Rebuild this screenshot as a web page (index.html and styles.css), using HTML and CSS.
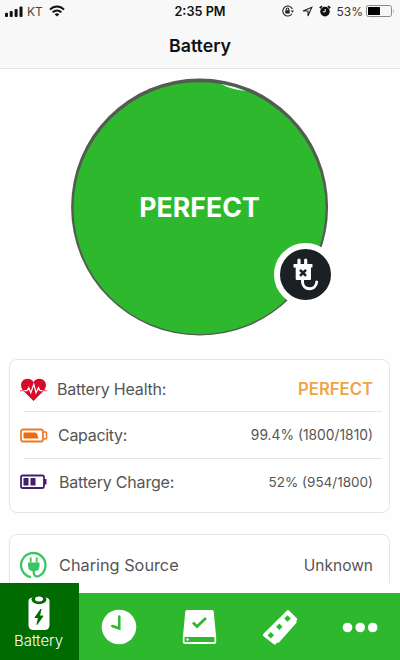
FILE: index.html
```
<!DOCTYPE html>
<html lang="en">
<head>
  <meta charset="UTF-8" />
  <meta name="viewport" content="width=device-width, initial-scale=1.0" />
  <title>Battery</title>
  <link rel="stylesheet" href="styles.css">
</head>
<body>

  <header class="top-bar">
    <div class="status-bar">
      <div class="status-left">
        <svg class="signal" width="18" height="11" viewBox="0 0 18 11" fill="#111">
          <rect x="0" y="6.8" width="3" height="4.2" rx="1" />
          <rect x="4.7" y="5" width="3" height="6" rx="1" />
          <rect x="9.6" y="3" width="3" height="8" rx="1" />
          <rect x="14.5" y="0.5" width="3" height="10.5" rx="1" />
        </svg>
        <span class="carrier">KT</span>
        <svg class="wifi" width="16" height="12" viewBox="0 0 16 12" fill="none" stroke="#111" stroke-width="2">
          <path d="M1 4.6C5 .4 11 .4 15 4.6" />
          <path d="M3.6 7.4C6.2 4.8 9.8 4.8 12.4 7.4" />
          <path d="M8 11.6L5.6 9.2Q8 7.2 10.4 9.2Z" fill="#111" stroke="none" />
        </svg>
      </div>
      <span class="time">2:35 PM</span>
      <div class="status-right">
        <svg width="12" height="12" viewBox="0 0 12 12" fill="none" stroke="#222" stroke-width="1.1">
          <path d="M10.4 4A5 5 0 1 0 10 8.7" />
          <path d="M8.8 5.6h3.2l-1.6 2.2z" fill="#222" stroke="none" />
          <rect x="3.3" y="5.2" width="4.4" height="3.3" fill="#222" stroke="none" />
          <path d="M4.2 5.4V4.3a1.3 1.3 0 0 1 2.6 0v1.1" />
        </svg>
        <svg class="arrow" width="11" height="11" viewBox="0 0 11 11" fill="none" stroke="#222" stroke-width="1.1">
          <path d="M1 5L9.8 1.2L6 10V5Z" />
        </svg>
        <svg class="alarm" width="12" height="12" viewBox="0 0 12 12">
          <circle cx="6" cy="6.6" r="4.8" fill="#111" />
          <path d="M.8 3.2L3 1.2M11.2 3.2L9 1.2" stroke="#111" stroke-width="1.8" />
          <path d="M6.2 4v2.8H3.8" fill="none" stroke="#f8f8f8" />
        </svg>
        <span class="percent">53%</span>
        <svg class="power" width="29" height="12" viewBox="0 0 29 12">
          <rect x=".5" y=".5" width="25" height="11" rx="2" fill="none" stroke="#888" />
          <rect x="2" y="2" width="12" height="8" rx=".5" fill="#000" />
          <path d="M27 4q1.5 2 0 4z" fill="#888" />
        </svg>
      </div>
    </div>
    <h1>Battery</h1>
  </header>

  <main class="content">
    <div class="gauge">
      <svg class="dial" width="258" height="258" viewBox="0 0 258 258">
        <circle cx="128.600" cy="129" r="128.500" fill="#525d50" />
        <circle cx="128.600" cy="130.200" r="126" fill="#2eb82e" />
        <path d="M150 6Q162 8 175 13Q160 11.500 150 6Z" fill="#fff" />
      </svg>
      <span class="gauge-text">PERFECT</span>
      <div class="plug-badge">
        <svg width="51" height="51" viewBox="0 0 51 51">
          <path d="M14 15h18q.5 0 .5.500v2.500q0 .5-.5.500h-1V30q0 1-1 1H16.700q-1 0-1-1V18.500H14q-.5 0-.5-.5v-2.500q0-.5.5-.5z" fill="#fff" />
          <path d="M19 11v5M25.700 11v5" stroke="#fff" stroke-width="3.200" stroke-linecap="round" />
          <path d="M20 20.800l6 6M26 20.800l-6 6" stroke="#1b2024" stroke-width="2.600" />
          <path d="M22.500 31v1.500c0 9.500 13.500 9.500 14.200.5" fill="none" stroke="#fff" stroke-width="2.900" stroke-linecap="round" />
        </svg>
      </div>
    </div>

    <section class="card">
      <div class="row first">
        <svg class="row-icon" width="28" height="28" viewBox="0 0 28 28">
          <path d="M13.500 26L3 15.500C-1.500 9.500 2.500 3.800 7.500 3.800C10.500 3.800 12.500 5.300 13.500 7.300C14.500 5.300 16.500 3.800 19.500 3.800C24.500 3.800 28.500 9.500 24 15.500Z" fill="#d80a2c" />
          <path d="M1 15.700h6l1.800-3 2 5 3-8.500 2.200 8.500 2.500-5 1.500 3H26" fill="none" stroke="#fff" stroke-width="1.200" />
          <path d="M0 15.700h4.500M22 15.700h5" stroke="#e05068" stroke-width="1" />
        </svg>
        <span class="label health">Battery Health:</span>
        <span class="value perfect">PERFECT</span>
      </div>
      <div class="divider"></div>
      <div class="row">
        <svg class="row-icon" width="28" height="28" viewBox="0 0 28 28">
          <rect x="1" y="8.500" width="22" height="12" rx="2" fill="none" stroke="#ee7b25" stroke-width="1.800" />
          <path d="M23.500 11h2q1 0 1 1v5q0 1-1 1h-2" fill="none" stroke="#ee7b25" stroke-width="1.600" />
          <path d="M3.500 11.500h11.500q1.500 0 2 1.500l1.500 4.500h-15z" fill="#f06a0c" />
        </svg>
        <span class="label capacity">Capacity:</span>
        <span class="value">99.4% (1800/1810)</span>
      </div>
      <div class="divider"></div>
      <div class="row last">
        <svg class="row-icon" width="28" height="28" viewBox="0 0 28 28">
          <rect x="1" y="7.500" width="23" height="12.500" rx="1.500" fill="none" stroke="#43206b" stroke-width="1.800" />
          <path d="M24 11h2.500v5.500H24z" fill="#43206b" />
          <path d="M3.500 10h5v7.500h-5zM10.500 10h5v7.500h-5z" fill="#43206b" />
        </svg>
        <span class="label charge">Battery Charge:</span>
        <span class="value charge-value">52% (954/1800)</span>
      </div>
    </section>

    <section class="card">
      <div class="row">
        <svg class="row-icon" width="28" height="28" viewBox="0 0 28 28" fill="none" stroke="#3cc463" stroke-width="2.300">
          <path d="M11 26.200A12.200 12.200 0 1 1 19 25C15 26.500 13.500 24 13.700 20" />
          <path d="M10.700 6.500v5M16.700 6.500v5" stroke-width="1.800" />
          <path d="M8 11.500h11.500v3q0 5-4 5.500h-3.500q-4-.5-4-5.500z" fill="#3cc463" stroke="none" />
        </svg>
        <span class="label source">Charing Source</span>
        <span class="value unknown">Unknown</span>
      </div>
    </section>
  </main>

  <nav class="tab-bar">
    <a class="tab active">
      <svg width="22" height="36" viewBox="0 0 22 36">
        <path d="M.5 6Q.5 3 4.500 2.500h13q4 .5 4 3.500v24q0 5-5 5h-11q-5 0-5-5z" fill="#fff" />
        <ellipse cx="11" cy="4.500" rx="7.500" ry="4.700" fill="#006b00" />
        <ellipse cx="11" cy="4" rx="4" ry="2.500" fill="#fff" />
        <path d="M13 14L7 22.500h3.500L9 29.500l6-8.500h-3.500z" fill="#006b00" stroke="#006b00" />
      </svg>
      <span>Battery</span>
    </a>
    <a class="tab">
      <svg width="36" height="36" viewBox="0 0 36 36">
        <circle cx="18" cy="18" r="17.300" fill="#fff" />
        <path d="M18.300 7.500v12l-7-2.500" fill="none" stroke="#2eb82e" stroke-width="2.500" stroke-linecap="round" />
      </svg>
    </a>
    <a class="tab">
      <svg width="36" height="36" viewBox="0 0 36 36">
        <path d="M6 1h25q1.500 0 1.700 1.500L35.200 29v4q0 2-2 2H3.800q-2 0-2-2v-4L4.300 2.500Q4.500 1 6 1z" fill="#fff" />
        <rect x="3.500" y="28" width="30" height="5" rx="1" fill="#2eb82e" />
        <circle cx="6.500" cy="30.500" r="1.200" fill="#fff" />
        <path d="M12 13.500l4 4L25 9" fill="none" stroke="#2eb82e" stroke-width="2.700" />
      </svg>
    </a>
    <a class="tab">
      <svg width="36" height="36" viewBox="0 0 36 36">
        <path d="M25 1.500q1-.8 2 0l8 8q.7 1-.3 2l-.5.700.7 1L16.500 34l-1.500-.5-1.200 1.800q-1 .5-2 0L1.200 27q-.7-1 0-2z" fill="#fff" />
        <path d="M25.500 6.500l3 3-3 3-3-3zM17.300 14.800l3 3-3 3-3-3zM8.800 23.300l3 3-3 3-3-3z" fill="#2eb82e" stroke="#2eb82e" stroke-width=".5" stroke-linejoin="round" />
      </svg>
    </a>
    <a class="tab">
      <svg width="36" height="36" viewBox="0 0 36 36" fill="#fff">
        <circle cx="5.500" cy="18.500" r="4.800" />
        <circle cx="18.200" cy="18.500" r="4.800" />
        <circle cx="30.700" cy="18.500" r="4.800" />
      </svg>
    </a>
  </nav>

</body>
</html>
```
FILE: styles.css
```
/* --- Core --- */
html, body {
  height: 100%;
  margin: 0;
}
body {
  display: flex;
  flex-direction: column;
  overflow: hidden;
  background: #fefefe;
  color: #555;
  font-family: Inter, "Liberation Sans", sans-serif;
}
svg {
  display: block;
  flex-shrink: 0;
}

/* --- Header --- */
.top-bar {
  height: 68px;
  flex-shrink: 0;
  background: #f8f8f8;
  border-bottom: 1px solid #e2e2e2;
  color: #111;
}
.status-bar {
  display: grid;
  grid-template-columns: 1fr auto 1fr;
  align-items: center;
  height: 22px;
  padding: 0 5px;
  font-size: 12px;
}
.status-left, .status-right {
  display: flex;
  align-items: center;
}
.status-right {
  justify-content: flex-end;
}
.carrier {
  margin: 0 6px 0 4px;
  color: #444;
}
.time {
  font-size: 12.7px;
  font-weight: 600;
}
.arrow {
  margin: 0 6px 0 8px;
}
.percent {
  margin: 0 3px 0 6px;
  color: #333;
}
h1 {
  margin: 0;
  font-size: 17.8px;
  font-weight: 600;
  line-height: 47px;
  text-align: center;
}

/* --- Battery dial --- */
.content {
  flex: 1;
  min-height: 0;
  padding: 9px 10px 0 9px;
  overflow: hidden;
}
.gauge {
  position: relative;
  display: flex;
  justify-content: center;
  align-items: center;
  width: 258px;
  height: 258px;
  margin: 0 auto 23px;
}
.gauge-text {
  position: absolute;
  color: #fff;
  font-size: 26.7px;
  font-weight: 700;
}
.plug-badge {
  position: absolute;
  right: -8px;
  bottom: 30px;
  border: 6px solid #fff;
  border-radius: 50%;
  background: #1b2024;
}

/* --- Info cards --- */
.card {
  box-sizing: border-box;
  height: 154px;
  margin-bottom: 21px;
  padding: 7px 16px 0 10px;
  border: 1px solid #e4e4e4;
  border-radius: 8px;
  background: #fff;
}
.row {
  display: flex;
  align-items: center;
  height: 46px;
}
.row.first {
  height: 44px;
}
.divider {
  height: 1px;
  margin: 0 -9px 0 4px;
  background: #e4e4e4;
}
.row-icon {
  margin-right: 10px;
}
.label {
  flex: 1;
  font-size: 16px;
  letter-spacing: -0.15px;
}
.health {
  margin-left: -1px;
  letter-spacing: -0.2px;
}
.capacity {
  letter-spacing: -0.3px;
}
.charge {
  margin-left: 1px;
  letter-spacing: -0.2px;
}
.source {
  margin-left: 1px;
  font-size: 16.3px;
  letter-spacing: 0;
}
.value {
  font-size: 13.8px;
}
.charge-value {
  font-size: 13.5px;
}
.perfect {
  color: #f0a344;
  font-size: 16.7px;
  font-weight: 600;
}
.unknown {
  font-size: 15.5px;
}

/* --- Tab bar --- */
.tab-bar {
  display: flex;
  align-items: flex-end;
  height: 77px;
  flex-shrink: 0;
  background: linear-gradient(#fefefe 10px, #2eb82e 10px);
}
.tab {
  display: flex;
  flex: 1;
  justify-content: center;
  align-items: center;
  height: 67px;
}
.tab.active {
  box-sizing: border-box;
  flex: 0 0 79px;
  flex-direction: column;
  height: 77px;
  padding: 1px 2px 0 0;
  background: #006b00;
  color: #fff;
  font-size: 15px;
  font-weight: 300;
}
```
